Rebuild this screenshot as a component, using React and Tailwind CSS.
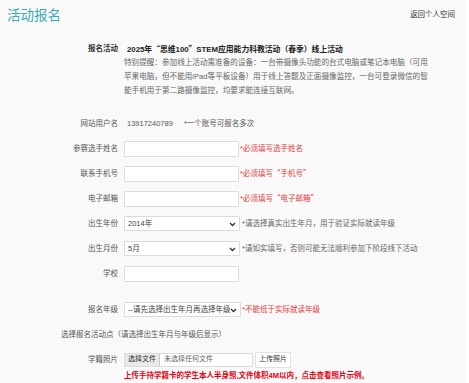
import React from 'react';

const font = { fontFamily: '"Liberation Sans", "Noto Sans CJK SC", sans-serif' };

// 全角引号用中文字体
const Q = ({ children }) => (
  <span className="font-['Noto_Sans_CJK_SC']">{children}</span>
);

// 左侧标签 + 右侧内容
const Row = ({ label, children, className = '' }) => (
  <div className={`flex items-center h-[25px] ${className}`}>
    <div className="w-[118px] shrink-0 text-right text-[7.5px] text-[#555]">{label}</div>
    <div className="ml-[6px] flex items-center">{children}</div>
  </div>
);

const Chevron = () => (
  <svg width="7" height="5" viewBox="0 0 7 5" className="absolute right-[3px] top-[5px]">
    <path d="M1 1 L3.5 3.5 L6 1" fill="none" stroke="#333" strokeWidth="1.3" />
  </svg>
);

const Select = ({ value, width = 'w-[116px]' }) => (
  <div className={`relative ${width} h-[15px] bg-white border border-[#dcdcdc] rounded-[1px] text-[7.5px] text-[#444] leading-[13px] pl-[3px]`}>
    {value}
    <Chevron />
  </div>
);

const Input = () => (
  <input
    type="text"
    className="w-[115px] h-[16px] bg-white border border-[#dcdcdc] rounded-[1px] outline-none"
  />
);

const Red = ({ children }) => (
  <span className="ml-[1px] text-[7.5px] text-[#e4393c]">{children}</span>
);

const Hint = ({ children }) => (
  <span className="ml-[2px] text-[7.5px] text-[#666]">{children}</span>
);

export default function App() {
  return (
    <div className="min-h-screen bg-white" style={font}>
      <div className="w-[466px] min-h-[383px] bg-[#f9f9f9]">
        {/* 标题栏 */}
        <div className="flex justify-between">
          <h1 className="pl-[7px] pt-[6px] text-[13.5px] leading-[20px] text-[#3aaab9]">活动报名</h1>
          <a className="pr-[11px] pt-[10px] text-[7.5px] text-[#333] leading-[10px]">返回个人空间</a>
        </div>

        {/* 活动信息 */}
        <div className="flex mt-[16px]">
          <div className="w-[118px] shrink-0 text-right text-[7.5px] font-bold text-[#333] leading-[13px]">报名活动</div>
          <div className="ml-[6px]">
            <div className="pl-[3px] text-[7.8px] font-bold text-[#222] leading-[13px]">
              2025年<Q>“</Q>思维100<Q>”</Q>STEM应用能力科教活动（春季）线上活动
            </div>
            <p className="text-[7.6px] text-[#666] leading-[14px] whitespace-nowrap">
              特别提醒：参加线上活动需准备的设备：一台带摄像头功能的台式电脑或笔记本电脑（可用
              <br />
              苹果电脑，但不能用iPad等平板设备）用于线上答题及正面摄像监控，一台可登录微信的智
              <br />
              能手机用于第二路摄像监控，均要求能连接互联网。
            </p>
          </div>
        </div>

        <div className="mt-[13px]">
          <Row label="网站用户名">
            <span className="pl-[3px] text-[7.5px] text-[#555]">13917240789</span>
            <span className="ml-[11px] text-[7.5px] text-[#555]">*一个账号可报名多次</span>
          </Row>
          <Row label="参赛选手姓名">
            <Input />
            <Red>*必须填写选手姓名</Red>
          </Row>
          <Row label="联系手机号">
            <Input />
            <Red>*必须填写<Q>“</Q>手机号<Q>”</Q></Red>
          </Row>
          <Row label="电子邮箱">
            <Input />
            <Red>*必须填写<Q>“</Q>电子邮箱<Q>”</Q></Red>
          </Row>
          <Row label="出生年份">
            <Select value="2014年" />
            <Hint>*请选择真实出生年月，用于验证实际就读年级</Hint>
          </Row>
          <Row label="出生月份">
            <Select value="5月" />
            <Hint>*请如实填写，否则可能无法顺利参加下阶段线下活动</Hint>
          </Row>
          <Row label="学校">
            <Input />
          </Row>

          <Row label="报名年级" className="mt-[11px]">
            <Select value="--请先选择出生年月再选择年级" width="w-[117px]" />
            <Red>*不能低于实际就读年级</Red>
          </Row>

          <div className="h-[25px] flex items-center pl-[61px] text-[7.5px] text-[#555]">
            选择报名活动点（请选择出生年月与年级后显示）
          </div>

          <Row label="学籍照片">
            <div className="flex items-center w-[129px] h-[14px] bg-white border border-[#dcdcdc]">
              <span className="h-full px-[3px] flex items-center bg-[#e9e9e9] border-r border-[#c8c8c8] text-[7px] text-[#333]">选择文件</span>
              <span className="ml-[4px] text-[7px] text-[#666]">未选择任何文件</span>
            </div>
            <button className="ml-[2px] h-[16px] px-[3px] bg-white border border-[#e2e2e2] text-[7px] text-[#333]">上传照片</button>
          </Row>

          <div className="pl-[124px] text-[7.5px] font-bold text-[#e60012] leading-[10px] -mt-[1px]">
            上传手持学籍卡的学生本人半身照,文件体积4M以内，点击查看照片示例。
          </div>
        </div>
      </div>
    </div>
  );
}
